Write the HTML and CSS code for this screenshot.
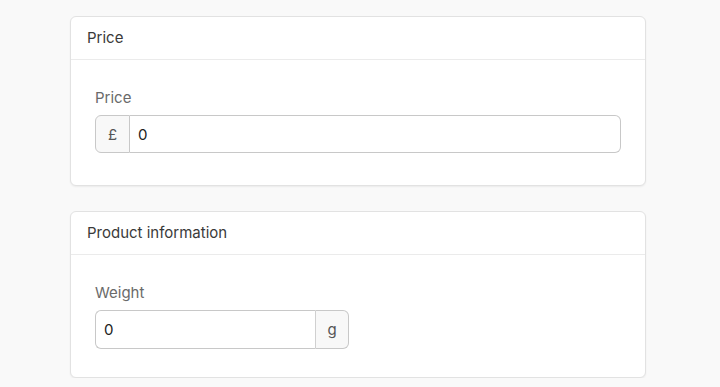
FILE: index.html
```html
<!DOCTYPE html>
<html lang="en">
<head>
<meta charset="utf-8">
<title>Product</title>
<link rel="stylesheet" href="styles.css">
</head>
<body>
<main class="page">
  <section class="card">
    <header class="card-header">Price</header>
    <div class="card-body card-body--price">
      <label class="field-label" for="price">Price</label>
      <div class="input-group input-group--full">
        <span class="addon addon--left">£</span>
        <input id="price" class="input input--right" type="text" value="0">
      </div>
    </div>
  </section>
  <section class="card">
    <header class="card-header">Product information</header>
    <div class="card-body">
      <label class="field-label" for="weight">Weight</label>
      <div class="input-group input-group--weight">
        <input id="weight" class="input input--left" type="text" value="0">
        <span class="addon addon--right">g</span>
      </div>
    </div>
  </section>
</main>
</body>
</html>
```

FILE: styles.css
```css
* { box-sizing: border-box; }
html, body { margin: 0; padding: 0; }
body {
  background: #f9f9f9;
  font-family: "Inter", "Noto Sans", sans-serif;
  font-size: 15px;
  color: #333;
}
.page {
  width: 576px;
  margin: 0 0 0 70px;
  padding-top: 16px;
  display: flex;
  flex-direction: column;
  gap: 25px;
}
.card {
  background: #fff;
  border: 1px solid #e2e2e2;
  border-radius: 6px;
  box-shadow: 0 1px 2px rgba(0,0,0,0.06);
}
.card-header {
  height: 43px;
  padding: 0 16px 1px;
  display: flex;
  align-items: center;
  border-bottom: 1px solid #ebebeb;
  color: #3a3a3a;
  font-size: 15px;
}
.card-body {
  padding: 28px 24px 28px;
}
.card-body--price { padding-bottom: 32px; }
.field-label {
  display: block;
  line-height: 20px;
  color: #6a6a6a;
  font-size: 15px;
  margin-bottom: 7px;
}
.input-group {
  display: flex;
  height: 38px;
}
.input-group--full { width: 100%; }
.input-group--weight { width: 254px; height: 39px; }
.addon {
  display: flex;
  align-items: center;
  justify-content: center;
  background: #f8f8f8;
  border: 1px solid #c8c8c8;
  color: #555;
  font-size: 15px;
}
.addon--left {
  width: 35px;
  border-radius: 6px 0 0 6px;
}
.addon--right {
  width: 34px;
  border-left: 1px solid #d0d0d0;
  border-radius: 0 6px 6px 0;
}
.input {
  flex: 1;
  min-width: 0;
  border: 1px solid #c8c8c8;
  background: #fff;
  font-family: inherit;
  font-size: 15px;
  color: #222;
  padding: 0 8px;
  outline: none;
}
.input--right {
  border-left: none;
  border-radius: 0 6px 6px 0;
}
.input--left {
  border-right: none;
  border-radius: 6px 0 0 6px;
}
```
